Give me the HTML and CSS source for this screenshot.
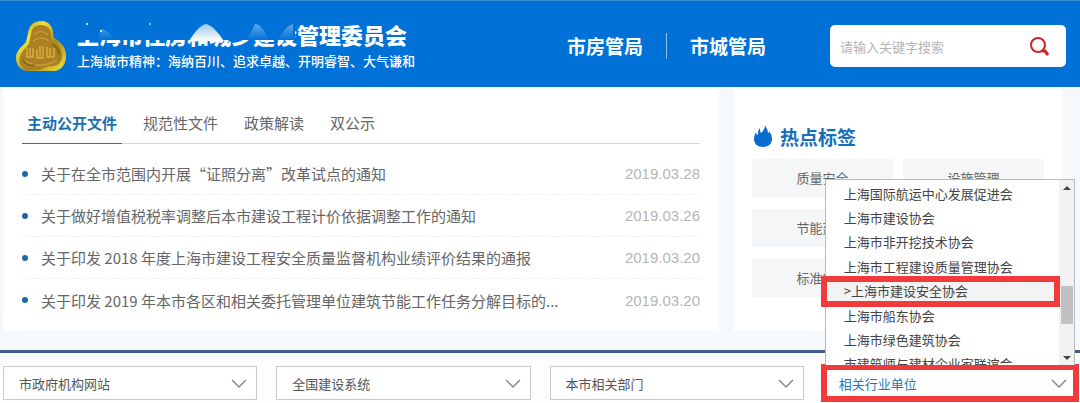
FILE: index.html
```html
<!DOCTYPE html>
<html lang="zh-CN">
<head>
    <meta charset="utf-8">
    <title>上海市住房和城乡建设管理委员会</title>
    <link rel="stylesheet" href="styles.css">
</head>
<body>
    <header class="header">
        <svg class="emblem" viewBox="0 0 52 52">
            <defs>
                <linearGradient id="rim" x1="0" y1="0" x2="1" y2="1">
                    <stop offset="0" stop-color="#8d7a1c"/>
                    <stop offset="0.3" stop-color="#efe23c"/>
                    <stop offset="0.6" stop-color="#a98a1a"/>
                    <stop offset="1" stop-color="#f2e83a"/>
                </linearGradient>
            </defs>
            <path d="M26 1C34 1 38 7 38 13L39 18C46 22 51 27 51 36C51 45 46 50 40 51H12C5 50 1 45 1 38C1 32 5 28 11 22L13 13C14 5 19 1 26 1Z" fill="url(#rim)"/>
            <path d="M26 5C32 5 36 9 36 14L37 21C44 25 48 30 47 37C46 44 41 47 34 46L24 50H14C7 49 3 44 5 37C6 32 10 29 14 24L16 14C17 8 20 5 26 5Z" fill="#ab8024"/>
            <path d="M12 28V37H18V28M15 28V36M22 29V38H28V26M25 26V37M32 27V37H39V28M35 28V36" fill="none" stroke="#d6ae3c" stroke-width="1.5"/>
            <path d="M19 15Q26 8 33 15M18 21Q26 15 34 21M10 41Q25 50 42 40" fill="none" stroke="#c49a35" stroke-width="1.5"/>
            <path d="M8 40Q12 47 20 45M37 24Q44 28 44 35" fill="none" stroke="#80601b" stroke-width="1.5"/>
        </svg>
        <div class="brand">
            <h1>上海市住房和城乡建设管理委员会</h1>
            <p>上海城市精神：海纳百川、追求卓越、开明睿智、大气谦和</p>
            <svg class="veil" viewBox="0 0 230 24">
                <defs>
                    <linearGradient id="glow" x1="0" y1="0" x2="0" y2="1">
                        <stop offset="0" stop-color="#fff" stop-opacity="0.6"/>
                        <stop offset="1" stop-color="#fff"/>
                    </linearGradient>
                    <linearGradient id="haze" x1="0" y1="0" x2="0" y2="1">
                        <stop offset="0" stop-color="#9cc9f2" stop-opacity="0.6"/>
                        <stop offset="1" stop-color="#9cc9f2" stop-opacity="0"/>
                    </linearGradient>
                </defs>
                <path d="M0 0H218V19H0Z" fill="#0071d7"/>
                <path d="M112 20Q122 4 129 3Q136 4 147 20Z" fill="url(#glow)"/>
                <path d="M20 19L24 8Q30 8 38 19ZM170 19L178 3Q184 2 192 19ZM200 19L210 6L216 3V19Z" fill="url(#haze)"/>
                <circle cx="10" cy="3" r="1" fill="#fff"/>
                <circle cx="24" cy="10" r="1" fill="#fff"/>
                <circle cx="73" cy="3" r="1" fill="#9cc9f2"/>
            </svg>
        </div>
        <nav class="header-nav">
            <a href="#">市房管局</a>
            <a href="#">市城管局</a>
        </nav>
        <form class="search">
            <input type="text" placeholder="请输入关键字搜索" aria-label="搜索">
            <button type="submit" aria-label="搜索">
                <svg viewBox="0 0 20 20">
                    <circle cx="9" cy="8" r="7" fill="none" stroke="#c9252b" stroke-width="2"/>
                    <path d="M13 14H16L19 18" fill="none" stroke="#c9252b" stroke-width="3"/>
                </svg>
            </button>
        </form>
    </header>

    <main class="main">
        <section class="panel news">
            <div class="tabs">
                <a href="#" class="active">主动公开文件</a>
                <a href="#">规范性文件</a>
                <a href="#">政策解读</a>
                <a href="#">双公示</a>
            </div>
            <ul class="news-list">
                <li><a href="#">关于在全市范围内开展“证照分离”改革试点的通知</a><time>2019.03.28</time></li>
                <li><a href="#">关于做好增值税税率调整后本市建设工程计价依据调整工作的通知</a><time>2019.03.26</time></li>
                <li><a href="#">关于印发 2018 年度上海市建设工程安全质量监督机构业绩评价结果的通报</a><time>2019.03.20</time></li>
                <li><a href="#">关于印发 2019 年本市各区和相关委托管理单位建筑节能工作任务分解目标的...</a><time>2019.03.20</time></li>
            </ul>
        </section>

        <section class="panel hot">
            <h2>
                <svg viewBox="0 0 18 22">
                    <path d="M11 0C12 3 14 4 14 8C15 8 15 7 15 6C17 9 18 11 18 14C18 19 14 22 9 22C4 22 0 19 0 14C0 11 1 9 2 7C2 9 3 10 4 10C4 7 4 5 6 3C6 5 6 7 7 8C9 6 11 4 11 0Z" fill="#0a6bce"/>
                </svg>
                热点标签
            </h2>
            <div class="tags">
                <a href="#">质量安全</a>
                <a href="#">设施管理</a>
                <a href="#" class="first">节能建材</a>
                <a href="#" class="first">标准定额</a>
            </div>
        </section>
    </main>

    <footer class="links">
        <div class="dropdown">
            <select aria-label="市政府机构网站"><option>市政府机构网站</option></select>
            <svg viewBox="0 0 16 10"><path d="M1 1L8 8L15 1"/></svg>
        </div>
        <div class="dropdown">
            <select aria-label="全国建设系统"><option>全国建设系统</option></select>
            <svg viewBox="0 0 16 10"><path d="M1 1L8 8L15 1"/></svg>
        </div>
        <div class="dropdown">
            <select aria-label="本市相关部门"><option>本市相关部门</option></select>
            <svg viewBox="0 0 16 10"><path d="M1 1L8 8L15 1"/></svg>
        </div>
        <div class="dropdown open">
            <select aria-label="相关行业单位"><option>相关行业单位</option></select>
            <svg viewBox="0 0 16 10"><path d="M1 1L8 8L15 1"/></svg>
            <div class="menu">
                <ul>
                    <li><a href="#">上海国际航运中心发展促进会</a></li>
                    <li><a href="#">上海市建设协会</a></li>
                    <li><a href="#">上海市非开挖技术协会</a></li>
                    <li><a href="#">上海市工程建设质量管理协会</a></li>
                    <li class="current"><a href="#">&gt;上海市建设安全协会</a></li>
                    <li><a href="#">上海市船东协会</a></li>
                    <li><a href="#">上海市绿色建筑协会</a></li>
                    <li><a href="#">市建筑师与建材企业家联谊会</a></li>
                </ul>
                <div class="scrollbar">
                    <span class="up"></span>
                    <span class="thumb"></span>
                    <span class="down"></span>
                </div>
            </div>
            <div class="marker"></div>
        </div>
    </footer>
</body>
</html>
```
FILE: styles.css
```css
* {
    box-sizing: border-box;
}
body {
    margin: 0;
    font-family: "Noto Sans CJK SC", sans-serif;
    font-size: 13px;
    color: #666;
    background-color: #f6f9fb;
    overflow: hidden;
}
a {
    color: inherit;
    text-decoration: none;
}
h1, h2, p, ul {
    margin: 0;
    padding: 0;
}
ul {
    list-style: none;
}

/* header */
.header {
    display: flex;
    align-items: center;
    height: 87px;
    padding: 4px 14px 0 15px;
    background-color: #0071d7;
    border-top: 1px solid #3f8fd6;
    color: #fff;
}
.emblem {
    width: 52px;
    height: 52px;
}
.brand {
    position: relative;
    margin-left: 10px;
    white-space: nowrap;
}
.brand h1 {
    margin-bottom: 4px;
    font-size: 22px;
    line-height: 26px;
    font-weight: 900;
}
.brand p {
    font-size: 13px;
    line-height: 20px;
    font-weight: 500;
}
.veil {
    position: absolute;
    left: 0;
    top: 0;
    width: 230px;
    height: 24px;
}
.header-nav {
    display: flex;
    margin-left: auto;
}
.header-nav a {
    padding: 0 23px 0 20px;
    font-size: 19px;
    line-height: 26px;
    font-weight: bold;
}
.header-nav a + a {
    border-left: 1px solid #8cc0ee;
    padding: 0 0 0 23px;
}
.search {
    display: flex;
    align-items: center;
    width: 236px;
    height: 42px;
    margin-left: 64px;
    background-color: #fff;
    border-radius: 5px;
}
.search input {
    flex: 1;
    min-width: 0;
    padding: 0 10px;
    border: none;
    background: none;
    font: inherit;
    outline: none;
}
.search input::placeholder {
    color: #b5b5b5;
}
.search button {
    width: 54px;
    height: 42px;
    padding: 4px 0 0;
    border: none;
    background: none;
}
.search svg {
    width: 20px;
    height: 20px;
}

/* panels */
.main {
    display: flex;
    gap: 15px;
    padding: 1px 18px 19px 3px;
}
.panel {
    height: 243px;
    background-color: #fff;
}
.news {
    flex: 1;
    padding: 14px 19px 0;
}
.tabs {
    display: flex;
    gap: 16px;
    border-bottom: 1px solid #d5d9dd;
}
.tabs a {
    margin-bottom: -1px;
    padding: 0 5px;
    font-size: 15px;
    line-height: 41px;
    border-bottom: 1px solid transparent;
}
.tabs .active {
    color: #1c6fae;
    font-weight: bold;
    border-color: #2b76a8;
}
.news-list {
    padding-top: 9px;
}
.news-list li {
    display: flex;
    align-items: center;
    height: 42px;
    border-bottom: 1px dashed #eee;
}
.news-list li:last-child {
    border-bottom: none;
}
.news-list li::before {
    content: "";
    width: 6px;
    height: 6px;
    margin-right: 13px;
    border-radius: 50%;
    background-color: #2166ac;
}
.news-list a {
    flex: 1;
    font-size: 15px;
    white-space: nowrap;
}
.news-list time {
    font-family: "Liberation Sans", Arial, sans-serif;
    font-size: 15px;
    color: #b5b5b5;
}
.hot {
    width: 328px;
    padding: 33px 18px 0;
}
.hot h2 {
    display: flex;
    align-items: center;
    gap: 8px;
    height: 30px;
    margin-bottom: 8px;
    font-size: 19px;
    color: #1470bd;
}
.hot h2 svg {
    width: 18px;
    height: 22px;
    margin-left: 2px;
}
.tags {
    display: grid;
    grid-template-columns: 1fr 1fr;
    gap: 12px 10px;
}
.tags a {
    line-height: 38px;
    text-align: center;
    background-color: #f5f6f7;
}
.tags .first {
    grid-column: 1;
}

/* bottom links */
.links {
    display: grid;
    grid-template-columns: repeat(4, 1fr);
    gap: 19px;
    padding: 13px 3px 4px;
    background-color: #fcfdff;
    border-top: 3px solid #3f5b8e;
}
.dropdown {
    position: relative;
}
.dropdown select {
    appearance: none;
    display: block;
    width: 100%;
    height: 34px;
    padding: 0 15px;
    border: 1px solid #cfc8c8;
    border-radius: 0;
    background-color: #fff;
    color: #555;
    font: inherit;
}
.dropdown > svg {
    position: absolute;
    right: 10px;
    top: 13px;
    width: 16px;
    height: 10px;
    fill: none;
    stroke: #888;
    stroke-width: 1.5;
    pointer-events: none;
}
.dropdown.open select {
    border-color: #f03a3c;
    color: #1d7ab8;
    outline: 6px solid #f03a3c;
    outline-offset: -4px;
}

.menu {
    position: absolute;
    left: 2px;
    right: 2px;
    bottom: 35px;
    display: flex;
    height: 186px;
    background-color: #fff;
    border: 1px solid #bbb;
    border-bottom: none;
    overflow: hidden;
}
.menu ul {
    flex: 1;
    display: grid;
    grid-template-rows: repeat(8, 1fr);
    height: 196px;
    padding-top: 1px;
}
.menu li {
    display: flex;
    align-items: center;
    padding-left: 18px;
    color: #444;
    white-space: nowrap;
}
.menu .current {
    background-color: #f3f3f3;
}
.scrollbar {
    display: flex;
    flex-direction: column;
    align-items: center;
    width: 15px;
    padding: 6px 0 5px;
    background-color: #f1f1f1;
}
.scrollbar .up {
    border: 4px solid transparent;
    border-top: none;
    border-bottom-color: #444;
}
.scrollbar .down {
    margin-top: auto;
    border: 4px solid transparent;
    border-bottom: none;
    border-top-color: #444;
}
.scrollbar .thumb {
    width: 12px;
    height: 38px;
    margin-top: 96px;
    background-color: #c1c1c1;
}
.marker {
    position: absolute;
    left: -2px;
    right: 17px;
    bottom: 93px;
    height: 31px;
    border: 6px solid #f03a3c;
    pointer-events: none;
}
```
